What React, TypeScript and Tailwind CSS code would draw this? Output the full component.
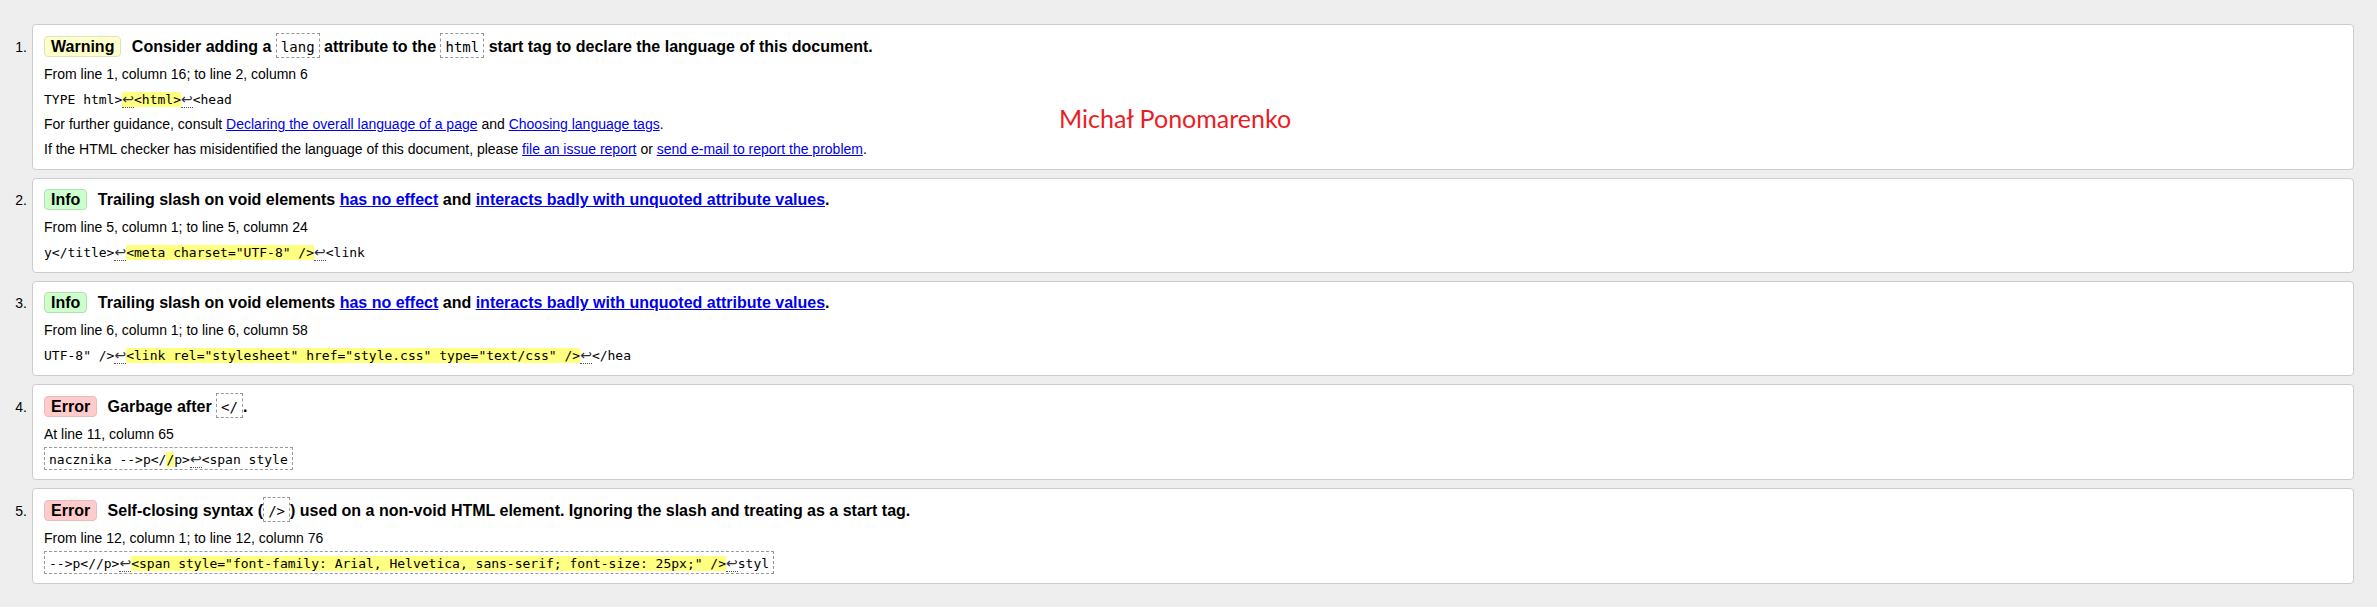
import React from "react";

type Kind = "Warning" | "Info" | "Error";

const badgeStyles: Record<Kind, string> = {
  Warning: "bg-[#ffffcc] border-[#e2e2b8]",
  Info: "bg-[#ccffcc] border-[#b8dcb8]",
  Error: "bg-[#ffcccc] border-[#e6bcbc]",
};

const Badge: React.FC<{ kind: Kind }> = ({ kind }) => (
  <span
    className={`inline-block border rounded-[4px] px-[6px] leading-[19px] mr-[6px] ${badgeStyles[kind]}`}
  >
    {kind}
  </span>
);

const Code: React.FC<{ children: React.ReactNode }> = ({ children }) => (
  <code className="inline-block border border-dashed border-[#999999] px-[4px] pt-[4px] leading-[19px] font-normal text-[14px] font-['DejaVu_Sans_Mono','Liberation_Mono',monospace]">
    {children}
  </code>
);

const A: React.FC<{ children: React.ReactNode }> = ({ children }) => (
  <a href="#" className="text-[#0000ee] underline">
    {children}
  </a>
);

// line feed marker
const Lf: React.FC = () => (
  <span className="text-[14px] text-[#333333] border-b border-dotted border-[#555555] font-['DejaVu_Sans',sans-serif]">↩</span>
);

const Hl: React.FC<{ children: React.ReactNode }> = ({ children }) => (
  <b className="font-normal bg-[#ffff80]">{children}</b>
);

const Line: React.FC<{ children: React.ReactNode }> = ({ children }) => (
  <p className="leading-[25px] text-[14px]">{children}</p>
);

const Extract: React.FC<{ boxed?: boolean; children: React.ReactNode }> = ({ boxed, children }) => (
  <p className="leading-[25px] text-[13px] font-['DejaVu_Sans_Mono','Liberation_Mono',monospace] whitespace-pre">
    {boxed ? (
      <span className="inline-block border border-dashed border-[#999999] px-[4px] pt-[2px] leading-[19px]">
        {children}
      </span>
    ) : (
      children
    )}
  </p>
);

interface Message {
  kind: Kind;
  title: React.ReactNode;
  location: string;
  extract: React.ReactNode;
  boxed?: boolean;
  extra?: React.ReactNode[];
}

const messages: Message[] = [
  {
    kind: "Warning",
    title: (
      <>
        Consider adding a <Code>lang</Code> attribute to the <Code>html</Code> start tag to declare the
        language of this document.
      </>
    ),
    location: "From line 1, column 16; to line 2, column 6",
    extract: (
      <>
        {"TYPE html>"}
        <Hl>
          <Lf />
          {"<html>"}
        </Hl>
        <Lf />
        {"<head"}
      </>
    ),
    extra: [
      <>
        For further guidance, consult <A>Declaring the overall language of a page</A> and{" "}
        <A>Choosing language tags</A>.
      </>,
      <>
        If the HTML checker has misidentified the language of this document, please{" "}
        <A>file an issue report</A> or <A>send e-mail to report the problem</A>.
      </>,
    ],
  },
  {
    kind: "Info",
    title: (
      <>
        Trailing slash on void elements <A>has no effect</A> and{" "}
        <A>interacts badly with unquoted attribute values</A>.
      </>
    ),
    location: "From line 5, column 1; to line 5, column 24",
    extract: (
      <>
        {"y</title>"}
        <Lf />
        <Hl>{'<meta charset="UTF-8" />'}</Hl>
        <Lf />
        {"<link"}
      </>
    ),
  },
  {
    kind: "Info",
    title: (
      <>
        Trailing slash on void elements <A>has no effect</A> and{" "}
        <A>interacts badly with unquoted attribute values</A>.
      </>
    ),
    location: "From line 6, column 1; to line 6, column 58",
    extract: (
      <>
        {'UTF-8" />'}
        <Lf />
        <Hl>{'<link rel="stylesheet" href="style.css" type="text/css" />'}</Hl>
        <Lf />
        {"</hea"}
      </>
    ),
  },
  {
    kind: "Error",
    title: (
      <>
        Garbage after <Code>{"</"}</Code>.
      </>
    ),
    location: "At line 11, column 65",
    boxed: true,
    extract: (
      <>
        {"nacznika -->p</"}
        <Hl>/</Hl>
        {"p>"}
        <Lf />
        {"<span style"}
      </>
    ),
  },
  {
    kind: "Error",
    title: (
      <>
        Self-closing syntax (<Code>{"/>"}</Code>) used on a non-void HTML element. Ignoring the slash and
        treating as a start tag.
      </>
    ),
    location: "From line 12, column 1; to line 12, column 76",
    boxed: true,
    extract: (
      <>
        {"-->p<//p>"}
        <Lf />
        <Hl>{'<span style="font-family: Arial, Helvetica, sans-serif; font-size: 25px;" />'}</Hl>
        <Lf />
        {"styl"}
      </>
    ),
  },
];

const App: React.FC = () => {
  return (
    <div className="relative h-[607px] bg-[#eeeeee] pt-[24px] text-black font-['Liberation_Sans',Arial,sans-serif]">
      <ol className="pr-[23px]">
        {messages.map((m, i) => (
          <li key={i} className="flex items-baseline mb-[8px]">
            <span className="w-[32px] shrink-0 text-right pr-[5px] text-[14px]">{i + 1}.</span>
            <div className="flex-1 bg-white border border-[#cccccc] rounded-[4px] pl-[11px] pt-[8px] pb-[7px]">
              <p className="font-bold text-[16px] leading-[26px] mb-[2px]">
                <Badge kind={m.kind} /> {m.title}
              </p>
              <Line>{m.location}</Line>
              <Extract boxed={m.boxed}>{m.extract}</Extract>
              {m.extra?.map((e, j) => (
                <Line key={j}>{e}</Line>
              ))}
            </div>
          </li>
        ))}
      </ol>
      <div className="absolute left-[1059px] top-[106px] text-[25px] leading-none text-[#ec1c24] font-['Lato','Open_Sans',sans-serif]">
        Michał Ponomarenko
      </div>
    </div>
  );
};

export default App;
